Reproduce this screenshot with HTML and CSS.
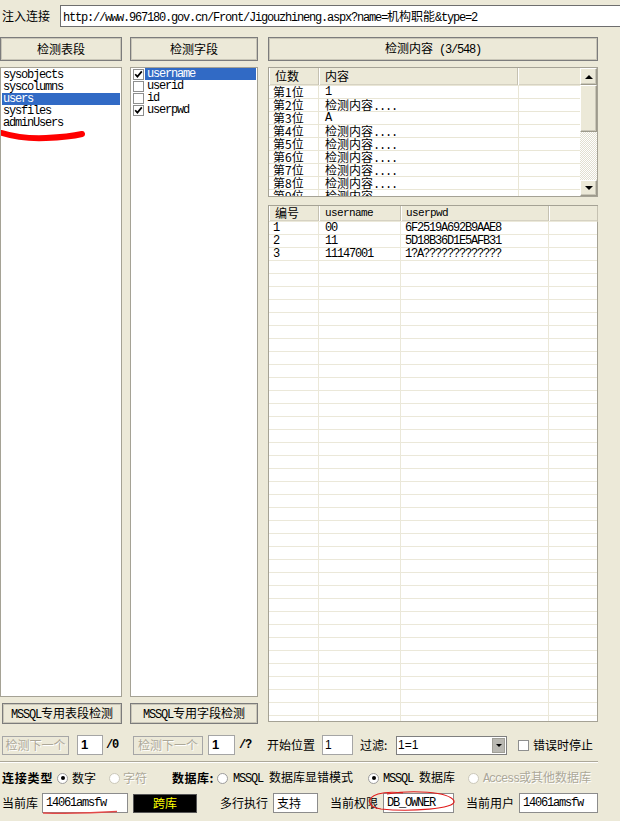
FILE: index.html
```html
<!DOCTYPE html>
<html lang="zh-CN">
<head>
<meta charset="utf-8">
<title>注入检测</title>
<link rel="stylesheet" href="styles.css">
</head>
<body>
<div class="urlrow">
  <span class="c lbl-url">注入连接</span>
  <div class="urlbox">http://www.967180.gov.cn/Front/Jigouzhineng.aspx?name=<span class="c">机构职能</span>&amp;type=2</div>
</div>

<div class="main">
  <div class="col col-a">
    <div class="btn"><span class="c">检测表段</span></div>
    <div class="list list-a">
      <div class="li">sysobjects</div>
      <div class="li">syscolumns</div>
      <div class="li sel">users</div>
      <div class="li">sysfiles</div>
      <div class="li">adminUsers</div>
      <svg class="scribble" width="100" height="80" viewBox="0 0 100 80"><path d="M1 65 Q20 71 45 70 Q68 69 81 66"/></svg>
    </div>
    <div class="btn btn-b btn-b-a"><span>MSSQL<span class="c">专用表段检测</span></span></div>
  </div>

  <div class="col col-b">
    <div class="btn"><span class="c">检测字段</span></div>
    <div class="list list-b">
      <div class="ci"><span class="cb"><svg width="9" height="9" viewBox="0 0 9 9"><path d="M1.2 4.2 L3.4 6.6 L7.8 1.4"/></svg></span><span class="ct sel">username</span></div>
      <div class="ci"><span class="cb"></span><span class="ct">userid</span></div>
      <div class="ci"><span class="cb"></span><span class="ct">id</span></div>
      <div class="ci"><span class="cb"><svg width="9" height="9" viewBox="0 0 9 9"><path d="M1.2 4.2 L3.4 6.6 L7.8 1.4"/></svg></span><span class="ct">userpwd</span></div>
    </div>
    <div class="btn btn-b"><span>MSSQL<span class="c">专用字段检测</span></span></div>
  </div>

  <div class="col col-c">
    <div class="btn"><span><span class="c">检测内容</span>&nbsp;(3/548)</span></div>
    <div class="t1">
      <div class="t1main">
        <div class="thead g1">
          <div class="th"><span class="c">位数</span></div>
          <div class="th"><span class="c">内容</span></div>
          <div class="th"></div>
        </div>
        <div class="tbody tb1">
          <div class="tr g1"><div class="td c">第1位</div><div class="td d2">1</div></div>
          <div class="tr g1"><div class="td c">第2位</div><div class="td d2"><span class="c">检测内容</span>....</div></div>
          <div class="tr g1"><div class="td c">第3位</div><div class="td d2">A</div></div>
          <div class="tr g1"><div class="td c">第4位</div><div class="td d2"><span class="c">检测内容</span>....</div></div>
          <div class="tr g1"><div class="td c">第5位</div><div class="td d2"><span class="c">检测内容</span>....</div></div>
          <div class="tr g1"><div class="td c">第6位</div><div class="td d2"><span class="c">检测内容</span>....</div></div>
          <div class="tr g1"><div class="td c">第7位</div><div class="td d2"><span class="c">检测内容</span>....</div></div>
          <div class="tr g1"><div class="td c">第8位</div><div class="td d2"><span class="c">检测内容</span>....</div></div>
          <div class="tr g1"><div class="td c">第9位</div><div class="td d2"><span class="c">检测内容</span>....</div></div>
        </div>
      </div>
      <div class="sb">
        <div class="sbb up"></div>
        <div class="thumb"></div>
        <div class="track"></div>
        <div class="sbb dn"></div>
      </div>
    </div>
    <div class="t2">
      <div class="thead thead2 g2">
        <div class="th"><span class="c">编号</span></div>
        <div class="th small">username</div>
        <div class="th th3 small">userpwd</div>
        <div class="th"></div>
      </div>
      <div class="tbody tb2">
        <div class="tr g2"><div class="td">1</div><div class="td d2">00</div><div class="td">6F2519A692B9AAE8</div></div>
        <div class="tr g2"><div class="td">2</div><div class="td d2">11</div><div class="td">5D18B36D1E5AFB31</div></div>
        <div class="tr g2"><div class="td">3</div><div class="td d2">11147001</div><div class="td">1?A?????????????</div></div>
      </div>
    </div>
  </div>
</div>

<div class="row1">
  <div class="dbtn dbtn1"><span class="c">检测下一个</span></div>
  <div class="nin nin1">1</div>
  <div class="slash">/0</div>
  <div class="dbtn dbtn2"><span class="c">检测下一个</span></div>
  <div class="nin nin2">1</div>
  <div class="slash slash2">/?</div>
  <div class="c lab lab-start">开始位置</div>
  <div class="sin">1</div>
  <div class="c lab lab-filter">过滤:</div>
  <div class="combo"><span class="cval">1=1</span><span class="cdd"></span></div>
  <span class="cb cb-err"></span>
  <div class="c lab lab-err">错误时停止</div>
</div>

<div class="sep"></div>

<div class="row2">
  <div class="c bold w-type">连接类型</div>
  <span class="rd on"></span>
  <div class="c rl w-num">数字</div>
  <span class="rd dis-rd"></span>
  <div class="c rl w-chr dis">字符</div>
  <div class="c bold w-db">数据库:</div>
  <span class="rd"></span>
  <div class="rl w-m1">MSSQL <span class="c">数据库显错模式</span></div>
  <span class="rd on"></span>
  <div class="rl w-m2">MSSQL <span class="c">数据库</span></div>
  <span class="rd dis-rd"></span>
  <div class="rl dis">Access<span class="c">或其他数据库</span></div>
</div>

<div class="row3">
  <div class="c lab w-cur">当前库</div>
  <div class="ov">
    <div class="fin fin-db">14061amsfw</div>
    <svg class="uline" width="80" height="6" viewBox="0 0 80 6"><path d="M1 3 Q38 4 75 1.5"/></svg>
  </div>
  <div class="kbox"><span class="c">跨库</span></div>
  <div class="c lab w-multi">多行执行</div>
  <div class="fin fin-sup"><span class="c">支持</span></div>
  <div class="c lab w-perm">当前权限</div>
  <div class="ov">
    <div class="fin fin-perm">DB_OWNER</div>
    <svg class="ring" width="96" height="26" viewBox="0 0 96 26"><path d="M22 5 C45 1 84 2 89 12 C92 20 44 23 16 20 C2 18 1 9 13 5 C20 3 30 3 38 4"/></svg>
  </div>
  <div class="c lab w-user">当前用户</div>
  <div class="fin fin-user">14061amsfw</div>
</div>
</body>
</html>
```

FILE: styles.css
```css
* { box-sizing: border-box; margin: 0; padding: 0; }
html, body { width: 620px; height: 821px; overflow: hidden; }
body {
  background: #ece9d8;
  color: #000;
  font-family: "Liberation Mono", "Noto Sans CJK SC", monospace;
  font-size: 12px;
  line-height: 12px;
  letter-spacing: -1.2px;
}
.c { font-family: "Noto Sans CJK SC", "Liberation Sans", sans-serif; letter-spacing: 0; }

/* url row */
.urlrow { display: flex; align-items: center; height: 27px; padding-top: 5px; }
.lbl-url { flex: none; margin-left: 2px; width: 58px; line-height: 22px; }
.urlbox {
  flex: none; width: 570px; height: 22px;
  background: #fff; border: 1px solid #6e6e6e;
  line-height: 20px; padding-left: 2px; white-space: nowrap; overflow: hidden;
}

/* main three columns */
.main { display: flex; margin-top: 10px; height: 688px; }
.col { display: flex; flex-direction: column; flex: none; }
.col-a { width: 122px; }
.col-b { width: 128px; margin-left: 8px; }
.col-c { width: 330px; margin-left: 10px; }

.btn {
  flex: none; height: 24px;
  display: flex; align-items: center; justify-content: center;
  border: 1px solid #7c7c7c;
  box-shadow: inset 0 0 0 1px #c9c6b8;
  white-space: nowrap;
}
.btn-b { height: 21px; margin-top: 6px; }
.btn-b-a { margin-left: 2px; width: 120px; }

.list {
  position: relative; flex: none;
  margin-top: 6px; height: 630px;
  background: #fff;
  border: 1px solid #a5a295;
  padding: 1px 1px 0 1px;
}
.list-b { padding-top: 0; }
.li { height: 12px; line-height: 12px; padding-left: 1px; white-space: nowrap; }
.sel { background: #316ac5; color: #fff; }
.scribble { position: absolute; left: 0; top: 0; }
.scribble path { fill: none; stroke: #ff0000; stroke-width: 6; stroke-linecap: round; }

.ci { display: flex; align-items: center; height: 12px; }
.cb {
  flex: none; width: 11px; height: 11px;
  border: 1px solid #8e8f8f; background: #fff;
  display: flex; align-items: center; justify-content: center;
}
.ci .cb { margin-left: 1px; }
.cb path { fill: none; stroke: #000; stroke-width: 1.7; }
.ct { flex: 1; margin-left: 1px; padding-left: 2px; height: 12px; line-height: 12px; }

/* tables */
.t1 {
  flex: none; margin-top: 6px; height: 130px;
  display: flex; background: #fff;
  border: 1px solid #a5a295;
}
.t1main { flex: 1; display: flex; flex-direction: column; overflow: hidden; }
.thead { flex: none; height: 17px; background: #ece9d8; border-bottom: 1px solid #d6d2c2; }
.thead2 { height: 15px; }
.g1 { display: grid; grid-template-columns: 50px 199px 63px; }
.g2 { display: grid; grid-template-columns: 50px 82px 148px 49px; }
.th {
  padding-left: 6px; line-height: 15px; white-space: nowrap;
  border-right: 1px solid #c5c1b1; box-shadow: inset 1px 0 0 #fff;
}
.thead2 .th { line-height: 14px; }
.th.small { font-size: 11px; letter-spacing: -0.6px; }
.th3 { padding-left: 5px; }
.tbody { flex: 1; }
.tb1 {
  overflow: hidden;
  background-image:
    repeating-linear-gradient(to bottom, #e9e6d6 0 1px, transparent 1px 13px),
    linear-gradient(to right, transparent 49px, #e9e6d6 49px 50px, transparent 50px 249px, #e9e6d6 249px 250px, transparent 250px);
}
.tr { height: 13px; padding-top: 1px; line-height: 12px; }
.td { padding-left: 4px; white-space: nowrap; }
.td.d2 { padding-left: 6px; }

.sb { flex: none; width: 17px; display: flex; flex-direction: column; }
.sbb, .thumb {
  flex: none; background: #ece9d8;
  border: 1px solid; border-color: #fff #9d9a8c #9d9a8c #fff;
  box-shadow: inset -1px -1px 0 #cac7b8;
}
.sbb { height: 17px; display: flex; align-items: center; justify-content: center; }
.sbb.dn { height: 16px; }
.thumb { height: 47px; }
.track {
  flex: 1;
  background-color: #fff;
  background-image: repeating-conic-gradient(#e2dfd0 0 25%, #fff 0 50%);
  background-size: 2px 2px;
}
.up::before { content: ""; border-left: 4px solid transparent; border-right: 4px solid transparent; border-bottom: 4px solid #000; }
.dn::before { content: ""; border-left: 4px solid transparent; border-right: 4px solid transparent; border-top: 4px solid #000; }

.t2 {
  flex: none; margin-top: 8px; height: 517px;
  display: flex; flex-direction: column;
  background: #fff; border: 1px solid #a5a295;
}
.tb2 {
  background-image:
    repeating-linear-gradient(to bottom, #ebe8d9 0 1px, transparent 1px 13px),
    linear-gradient(to right, transparent 49px, #ebe8d9 49px 50px, transparent 50px 131px, #ebe8d9 131px 132px, transparent 132px 279px, #ebe8d9 279px 280px, transparent 280px);
}

/* row 1 */
.row1 { display: flex; align-items: center; height: 20px; margin-top: 10px; }
.dbtn {
  flex: none; height: 19px;
  display: flex; align-items: center; justify-content: center;
  border: 1px solid #a6a6a6;
  color: #aca899; text-shadow: 1px 1px 0 #fff;
}
.dbtn1 { margin-left: 2px; width: 67px; }
.dbtn2 { width: 70px; }
.nin {
  flex: none; height: 20px; background: #fff; border: 1px solid #a5a5a5;
  font: bold 13px/18px "Liberation Sans", sans-serif; letter-spacing: 0; padding-left: 3px;
}
.nin1 { margin-left: 8px; width: 26px; }
.nin2 { margin-left: 5px; width: 27px; }
.slash { flex: none; width: 27px; margin-left: 3px; font-weight: bold; }
.slash2 { width: 28px; margin-left: 4px; }
.lab { flex: none; white-space: nowrap; line-height: 18px; }
.lab-start { width: 55px; }
.sin {
  flex: none; width: 31px; height: 20px; background: #fff; border: 1px solid #a5a5a5;
  font: 12px/18px "Liberation Sans", sans-serif; letter-spacing: 0; padding-left: 2px;
}
.lab-filter { width: 36px; margin-left: 7px; }
.combo {
  flex: none; width: 111px; height: 19px; display: flex;
  background: #fff; border: 1px solid #7f7f7f;
}
.cval { flex: 1; padding-left: 1px; font: 12px/17px "Liberation Sans", sans-serif; letter-spacing: 0; }
.cdd {
  flex: none; width: 13px; margin: 1px;
  background: #b9b8b2; border: 1px solid #a09f97;
  display: flex; align-items: center; justify-content: center;
}
.cdd::before { content: ""; border-left: 3px solid transparent; border-right: 3px solid transparent; border-top: 3px solid #000; }
.cb-err { margin-left: 11px; }
.lab-err { margin-left: 4px; }

.sep { width: 598px; height: 2px; margin-top: 6px; border-top: 1px solid #aca899; border-bottom: 1px solid #fff; }

/* row 2 */
.row2 { display: flex; align-items: center; height: 16px; margin-top: 7px; white-space: nowrap; }
.bold { font-weight: bold; flex: none; }
.w-type { margin-left: 2px; width: 55px; letter-spacing: 0.8px; }
.w-db { width: 45px; letter-spacing: 0.5px; }
.rd {
  flex: none; width: 11px; height: 11px; border-radius: 50%;
  border: 1px solid #9c9c9c; background: #fff;
  display: flex; align-items: center; justify-content: center;
}
.rd.on::after { content: ""; width: 4px; height: 4px; border-radius: 50%; background: #000; }
.dis-rd { border-color: #cbc8ba; }
.rl { flex: none; margin-left: 4px; }
.w-num { width: 37px; }
.w-chr { width: 49px; margin-left: 3px; }
.w-m1 { width: 135px; margin-left: 5px; }
.w-m2 { width: 85px; }
.dis { color: #aca899; text-shadow: 1px 1px 0 #fff; }

/* row 3 */
.row3 { display: flex; align-items: center; height: 20px; margin-top: 7px; white-space: nowrap; }
.w-cur { margin-left: 2px; width: 40px; }
.fin {
  flex: none; height: 20px; background: #fff; border: 1px solid #8c8c8c;
  padding-left: 3px; line-height: 18px;
}
.fin-db { width: 86px; }
.fin-sup { width: 45px; }
.fin-perm { width: 71px; }
.fin-user { width: 79px; }
.ov { position: relative; flex: none; }
.uline { position: absolute; left: 0; top: 17px; }
.uline path { fill: none; stroke: #e24848; stroke-width: 1.6; }
.ring { position: absolute; left: -18px; top: -4px; }
.ring path { fill: none; stroke: #e01c1c; stroke-width: 1.2; }
.kbox {
  flex: none; width: 64px; height: 19px; margin-left: 5px;
  background: #000; color: #ffff00; border: 1px solid #555;
  display: flex; align-items: center; justify-content: center;
}
.w-multi { width: 53px; margin-left: 23px; }
.w-perm { width: 53px; margin-left: 12px; }
.w-user { width: 53px; margin-left: 12px; }
```
